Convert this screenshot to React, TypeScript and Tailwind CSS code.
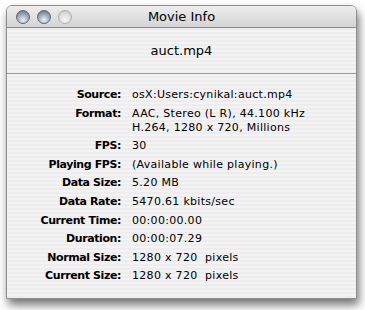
import React from "react";

const rows: { label: string; value: string[] }[] = [
  { label: "Source:", value: ["osX:Users:cynikal:auct.mp4"] },
  { label: "Format:", value: ["AAC, Stereo (L R), 44.100 kHz", "H.264, 1280 x 720, Millions"] },
  { label: "FPS:", value: ["30"] },
  { label: "Playing FPS:", value: ["(Available while playing.)"] },
  { label: "Data Size:", value: ["5.20 MB"] },
  { label: "Data Rate:", value: ["5470.61 kbits/sec"] },
  { label: "Current Time:", value: ["00:00:00.00"] },
  { label: "Duration:", value: ["00:00:07.29"] },
  { label: "Normal Size:", value: ["1280 x 720  pixels"] },
  { label: "Current Size:", value: ["1280 x 720  pixels"] },
];

function Light({ on }: { on: boolean }) {
  return (
    <div
      className={
        "w-[14px] h-[14px] rounded-full border " +
        (on
          ? "border-[#5f6873] bg-[radial-gradient(circle_at_50%_75%,#eef3f8_0%,#a7b3c0_45%,#5e6977_100%)]"
          : "border-[#aeaeae] bg-[radial-gradient(circle_at_50%_75%,#f6f6f6_0%,#dedede_55%,#c2c2c2_100%)]")
      }
    />
  );
}

export default function App() {
  return (
    <div className="w-[365px] h-[310px] bg-white pt-[5px] pl-[6px] font-['DejaVu_Sans',sans-serif] text-black">
      <div className="w-[351px] h-[294px] rounded-t-[6px] overflow-hidden flex flex-col border border-[#8e8e8e] shadow-[2px_6px_10px_rgba(0,0,0,0.55)]">
        <div className="h-[22px] shrink-0 flex items-center relative bg-[linear-gradient(#ededed,#d4d4d4)] border-b border-[#8a8a8a]">
          <div className="flex gap-[7px] pl-[9px]">
            <Light on />
            <Light on />
            <Light on={false} />
          </div>
          <div className="absolute inset-0 flex items-center justify-center text-[13px]">Movie Info</div>
        </div>
        <div className="flex-1 flex flex-col bg-[repeating-linear-gradient(#ededed_0px,#ededed_2px,#f3f3f3_2px,#f3f3f3_4px)]">
          <div className="h-[46px] shrink-0 flex items-center justify-center text-[13px] border-b border-[#9a9a9a]">
            auct.mp4
          </div>
          <div className="pt-[14px] flex flex-col gap-[4.6px] text-[11px] leading-[14px]">
            {rows.map((r) => (
              <div key={r.label} className="flex">
                <div className="w-[114px] text-right font-bold tracking-[-0.4px]">{r.label}</div>
                <div className="pl-[11px] tracking-[0.3px]">
                  {r.value.map((v) => (
                    <div key={v} className="whitespace-pre">{v}</div>
                  ))}
                </div>
              </div>
            ))}
          </div>
        </div>
      </div>
    </div>
  );
}
